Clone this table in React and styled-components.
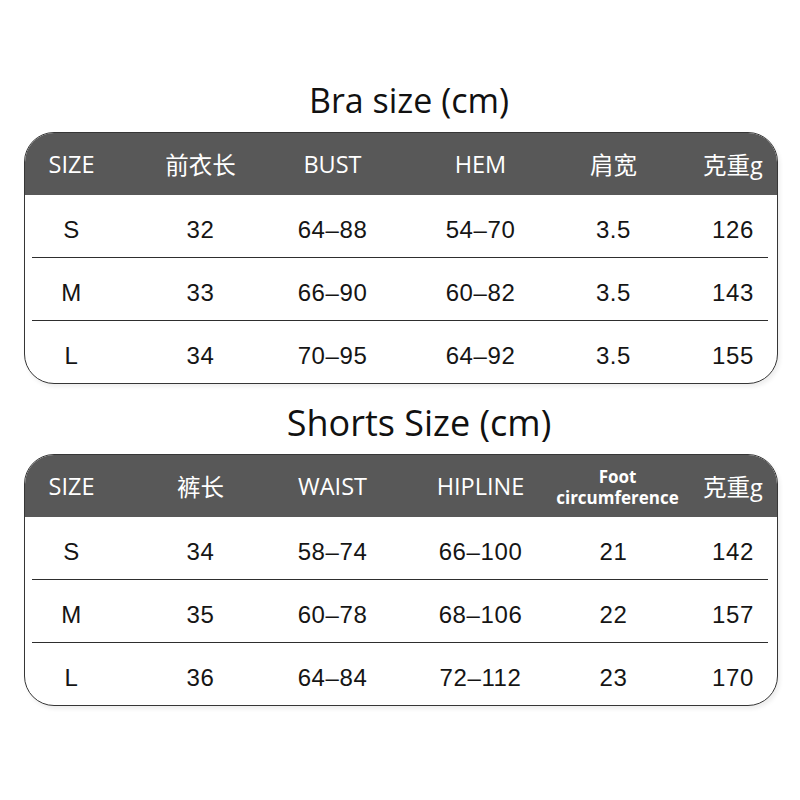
import React from "react";
import styled, { createGlobalStyle } from "styled-components";

const Global = createGlobalStyle`
  html, body { margin: 0; padding: 0; background: #ffffff; }
  #root { width: 800px; height: 800px; }
`;

const Page = styled.div`
  width: 800px;
  height: 800px;
  box-sizing: border-box;
  padding: 78px 22px 0 24px;
  display: flex;
  flex-direction: column;
  background: #fff;
`;

const Title = styled.h1`
  margin: ${(p) => p.$gap}px -22px 0 -24px;
  padding-left: ${(p) => p.$shift * 2}px;
  height: 44px;
  line-height: 44px;
  text-align: center;
  font-family: "Open Sans", "Noto Sans", sans-serif;
  font-weight: 400;
  font-size: ${(p) => p.$size}px;
  color: #111;
`;

const Table = styled.div`
  margin-top: ${(p) => p.$top}px;
  width: 754px;
  box-sizing: border-box;
  border: 1.5px solid #363636;
  border-radius: 30px;
  overflow: hidden;
  background: #fff;
  box-shadow: 2px 3px 4px rgba(0, 0, 0, 0.07);
`;

const Grid = styled.div`
  display: grid;
  grid-template-columns: 93px 165px 99px 197px 69px 1fr;
  align-items: center;
`;

const HeaderRow = styled(Grid)`
  height: 62px;
  background: #585858;
  margin: -1.5px -1.5px 0;
  padding: 1.5px 1.5px 0;
`;

const Row = styled(Grid)`
  height: 62px;
`;

const Divider = styled.div`
  height: 1px;
  background: #2e2e2e;
  margin: 0 9px 0 7px;
`;

const HeadCell = styled.div`
  display: flex;
  justify-content: center;
  align-items: center;
  padding-left: ${(p) => (p.$last ? 41 : 0)}px;
  white-space: nowrap;
  font-family: "Open Sans", "Noto Sans CJK SC", sans-serif;
  font-size: 23.5px;
  color: #fff;
`;

const TwoLine = styled.div`
  display: flex;
  flex-direction: column;
  align-items: center;
  font-family: "Open Sans", "Noto Sans", sans-serif;
  font-weight: 700;
  font-size: 17px;
  line-height: 21px;
  color: #fff;
  margin: 2px 0 0 8px;
`;

const Cell = styled.div`
  display: flex;
  justify-content: center;
  padding-left: ${(p) => (p.$last ? 41 : 0)}px;
  padding-top: 8px;
  white-space: nowrap;
  font-family: "Liberation Sans", Arial, sans-serif;
  font-size: 24px;
  letter-spacing: 0.6px;
  color: #151515;
`;

const bra = {
  head: ["SIZE", "前衣长", "BUST", "HEM", "肩宽", "克重g"],
  rows: [
    ["S", "32", "64–88", "54–70", "3.5", "126"],
    ["M", "33", "66–90", "60–82", "3.5", "143"],
    ["L", "34", "70–95", "64–92", "3.5", "155"],
  ],
};

const shorts = {
  head: ["SIZE", "裤长", "WAIST", "HIPLINE", ["Foot", "circumference"], "克重g"],
  rows: [
    ["S", "34", "58–74", "66–100", "21", "142"],
    ["M", "35", "60–78", "68–106", "22", "157"],
    ["L", "36", "64–84", "72–112", "23", "170"],
  ],
};

function SizeTable({ data, top }) {
  return (
    <Table $top={top}>
      <HeaderRow>
        {data.head.map((h, i) => (
          <HeadCell key={i} $last={i === 5}>
            {Array.isArray(h) ? (
              <TwoLine>
                <span>{h[0]}</span>
                <span>{h[1]}</span>
              </TwoLine>
            ) : (
              h
            )}
          </HeadCell>
        ))}
      </HeaderRow>
      {data.rows.map((r, ri) => (
        <React.Fragment key={ri}>
          {ri > 0 && <Divider />}
          <Row>
            {r.map((c, ci) => (
              <Cell key={ci} $last={ci === 5}>
                {c}
              </Cell>
            ))}
          </Row>
        </React.Fragment>
      ))}
    </Table>
  );
}

export default function App() {
  return (
    <>
      <Global />
      <Page>
        <Title $shift={9} $size={34} $gap={0}>
          Bra size (cm)
        </Title>
        <SizeTable data={bra} top={10} />
        <Title $shift={19} $size={36} $gap={17}>
          Shorts Size (cm)
        </Title>
        <SizeTable data={shorts} top={9} />
      </Page>
    </>
  );
}
